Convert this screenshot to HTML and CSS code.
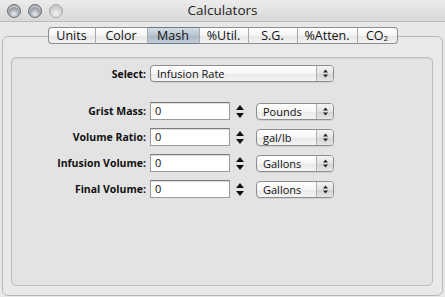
FILE: index.html
```html
<!DOCTYPE html>
<html>
<head>
<meta charset="utf-8">
<link rel="stylesheet" href="styles.css">
</head>
<body>
<div class="window">
  <div class="titlebar">
    <div class="lights">
      <span class="light dark"></span>
      <span class="light dark"></span>
      <span class="light pale"></span>
    </div>
    <div class="title">Calculators</div>
  </div>
  <div class="tabview">
    <div class="tabs">
      <div class="tab t-units">Units</div>
      <div class="tab t-color">Color</div>
      <div class="tab t-mash selected">Mash</div>
      <div class="tab t-util">%Util.</div>
      <div class="tab t-sg">S.G.</div>
      <div class="tab t-atten">%Atten.</div>
      <div class="tab t-co2">CO<sub>2</sub></div>
    </div>
    <div class="group">
      <div class="select-row">
        <label class="lbl">Select:</label>
        <div class="popup wide"><span class="ptext">Infusion Rate</span><span class="arrows"><svg width="7" height="9" viewBox="0 0 7 9"><path d="M3.5 0.5 L6 3.5 H1 Z M3.5 8.5 L6 5.5 H1 Z" fill="#222"/></svg></span></div>
      </div>
      <div class="grid">
        <label class="lbl">Grist Mass:</label>
        <div class="field">0</div>
        <div class="stepper"><svg width="8" height="13" viewBox="0 0 8 13"><path d="M4 0 L8 5 H0 Z M4 13 L8 8 H0 Z" fill="#111"/></svg></div>
        <div class="popup"><span class="ptext">Pounds</span><span class="arrows"><svg width="7" height="9" viewBox="0 0 7 9"><path d="M3.5 0.5 L6 3.5 H1 Z M3.5 8.5 L6 5.5 H1 Z" fill="#222"/></svg></span></div>

        <label class="lbl">Volume Ratio:</label>
        <div class="field">0</div>
        <div class="stepper"><svg width="8" height="13" viewBox="0 0 8 13"><path d="M4 0 L8 5 H0 Z M4 13 L8 8 H0 Z" fill="#111"/></svg></div>
        <div class="popup"><span class="ptext">gal/lb</span><span class="arrows"><svg width="7" height="9" viewBox="0 0 7 9"><path d="M3.5 0.5 L6 3.5 H1 Z M3.5 8.5 L6 5.5 H1 Z" fill="#222"/></svg></span></div>

        <label class="lbl">Infusion Volume:</label>
        <div class="field">0</div>
        <div class="stepper"><svg width="8" height="13" viewBox="0 0 8 13"><path d="M4 0 L8 5 H0 Z M4 13 L8 8 H0 Z" fill="#111"/></svg></div>
        <div class="popup"><span class="ptext">Gallons</span><span class="arrows"><svg width="7" height="9" viewBox="0 0 7 9"><path d="M3.5 0.5 L6 3.5 H1 Z M3.5 8.5 L6 5.5 H1 Z" fill="#222"/></svg></span></div>

        <label class="lbl">Final Volume:</label>
        <div class="field">0</div>
        <div class="stepper"><svg width="8" height="13" viewBox="0 0 8 13"><path d="M4 0 L8 5 H0 Z M4 13 L8 8 H0 Z" fill="#111"/></svg></div>
        <div class="popup"><span class="ptext">Gallons</span><span class="arrows"><svg width="7" height="9" viewBox="0 0 7 9"><path d="M3.5 0.5 L6 3.5 H1 Z M3.5 8.5 L6 5.5 H1 Z" fill="#222"/></svg></span></div>
      </div>
    </div>
  </div>
</div>
</body>
</html>
```

FILE: styles.css
```css
html, body {
  margin: 0;
  padding: 0;
}
body {
  width: 445px;
  height: 297px;
  overflow: hidden;
  background: #e8e8e8;
  font-family: "Open Sans", "DejaVu Sans", sans-serif;
  color: #111;
}
.window {
  width: 445px;
  height: 297px;
  display: flex;
  flex-direction: column;
  background: #e8e8e8;
}
.titlebar {
  height: 21px;
  flex: none;
  position: relative;
  background: linear-gradient(#ececec, #d8d8d8);
  border-bottom: 1px solid #bcbcbc;
  display: flex;
  align-items: center;
  justify-content: center;
}
.lights {
  position: absolute;
  left: 7px;
  top: 4px;
  display: flex;
  gap: 7px;
}
.light {
  width: 14px;
  height: 14px;
  border-radius: 50%;
  box-sizing: border-box;
}
.light.dark {
  background: radial-gradient(circle at 50% 75%, #e8eef2 0%, #a4aab0 45%, #6c7278 100%);
  border: 1px solid #6a6e72;
  box-shadow: inset 0 2px 1px rgba(255,255,255,0.5);
}
.light.pale {
  background: radial-gradient(circle at 50% 75%, #f4f4f4 0%, #d2d2d2 55%, #b8b8b8 100%);
  border: 1px solid #a8a8a8;
}
.title {
  font-size: 13.5px;
  color: #222;
  line-height: 21px;
}
.tabview {
  flex: 1;
  margin: 14px 2px 1px 2px;
  border: 1px solid #b8b8b8;
  border-radius: 6px;
  background: #e9e9e9;
  display: flex;
  flex-direction: column;
}
.tabs {
  display: flex;
  justify-content: center;
  margin-top: -10px;
  height: 17px;
}
.tab {
  box-sizing: border-box;
  height: 17px;
  font-size: 12.5px;
  line-height: 16px;
  text-align: center;
  background: linear-gradient(#ffffff, #f4f4f4 50%, #e6e6e6 51%, #f2f2f2);
  border-top: 1px solid #8e8e8e;
  border-bottom: 1px solid #8e8e8e;
  border-right: 1px solid #a8a8a8;
  color: #111;
}
.tab:first-child {
  border-left: 1px solid #8e8e8e;
  border-radius: 4px 0 0 4px;
}
.tab:last-child {
  border-right: 1px solid #8e8e8e;
  border-radius: 0 4px 4px 0;
}
.tab.selected {
  background: linear-gradient(#d4dde6, #b8c4d0 50%, #a8b6c4 51%, #c4d0da);
  border-top-color: #6e7a86;
  border-bottom-color: #6e7a86;
}
.t-units { width: 48px; }
.t-color { width: 52px; }
.t-mash { width: 52px; }
.t-util { width: 49px; }
.t-sg { width: 49px; }
.t-atten { width: 60px; }
.t-co2 { width: 40px; }
.tab sub {
  font-size: 8px;
  vertical-align: -1px;
  line-height: 0;
}
.group {
  flex: 1;
  margin: 13px 9px 9px 8px;
  border: 1px solid #bdbdbd;
  border-radius: 5px;
  background: #e3e3e3;
  padding: 7px 0 0 0;
  box-shadow: inset 0 1px 0 #d6d6d6;
}
.select-row {
  display: grid;
  grid-template-columns: 134px 184px;
  column-gap: 4px;
  align-items: center;
}
.grid {
  margin-top: 20px;
  display: grid;
  grid-template-columns: 134px 80px 18px 78px;
  column-gap: 4px;
  row-gap: 8px;
  grid-auto-rows: 18px;
  align-items: center;
}
.lbl {
  font-weight: bold;
  font-size: 10.5px;
  text-align: right;
  color: #111;
}
.field {
  box-sizing: border-box;
  height: 18px;
  background: #fff;
  border: 1px solid #9a9a9a;
  border-top-color: #7a7a7a;
  box-shadow: inset 0 1px 1px rgba(0,0,0,0.15);
  font-size: 11px;
  line-height: 15px;
  padding-left: 4px;
}
.stepper {
  display: flex;
  align-items: center;
  padding-left: 2px;
}
.stepper svg { display: block; }
.popup {
  box-sizing: border-box;
  height: 17px;
  border: 1px solid #8e8e8e;
  border-radius: 4px;
  background: linear-gradient(#ffffff, #f6f6f6 50%, #e9e9e9 51%, #f4f4f4);
  display: flex;
  align-items: center;
  font-size: 11px;
  box-shadow: 0 1px 0 rgba(0,0,0,0.08);
}
.popup .ptext {
  flex: 1;
  padding-left: 6px;
  line-height: 15px;
}
.popup .arrows {
  width: 16px;
  height: 15px;
  border-left: 1px solid #b0b0b0;
  border-radius: 0 3px 3px 0;
  background: linear-gradient(#f4f4f4, #e2e2e2 50%, #d2d2d2 51%, #e6e6e6);
  display: flex;
  align-items: center;
  justify-content: center;
}
.popup .arrows svg { display: block; }
```
